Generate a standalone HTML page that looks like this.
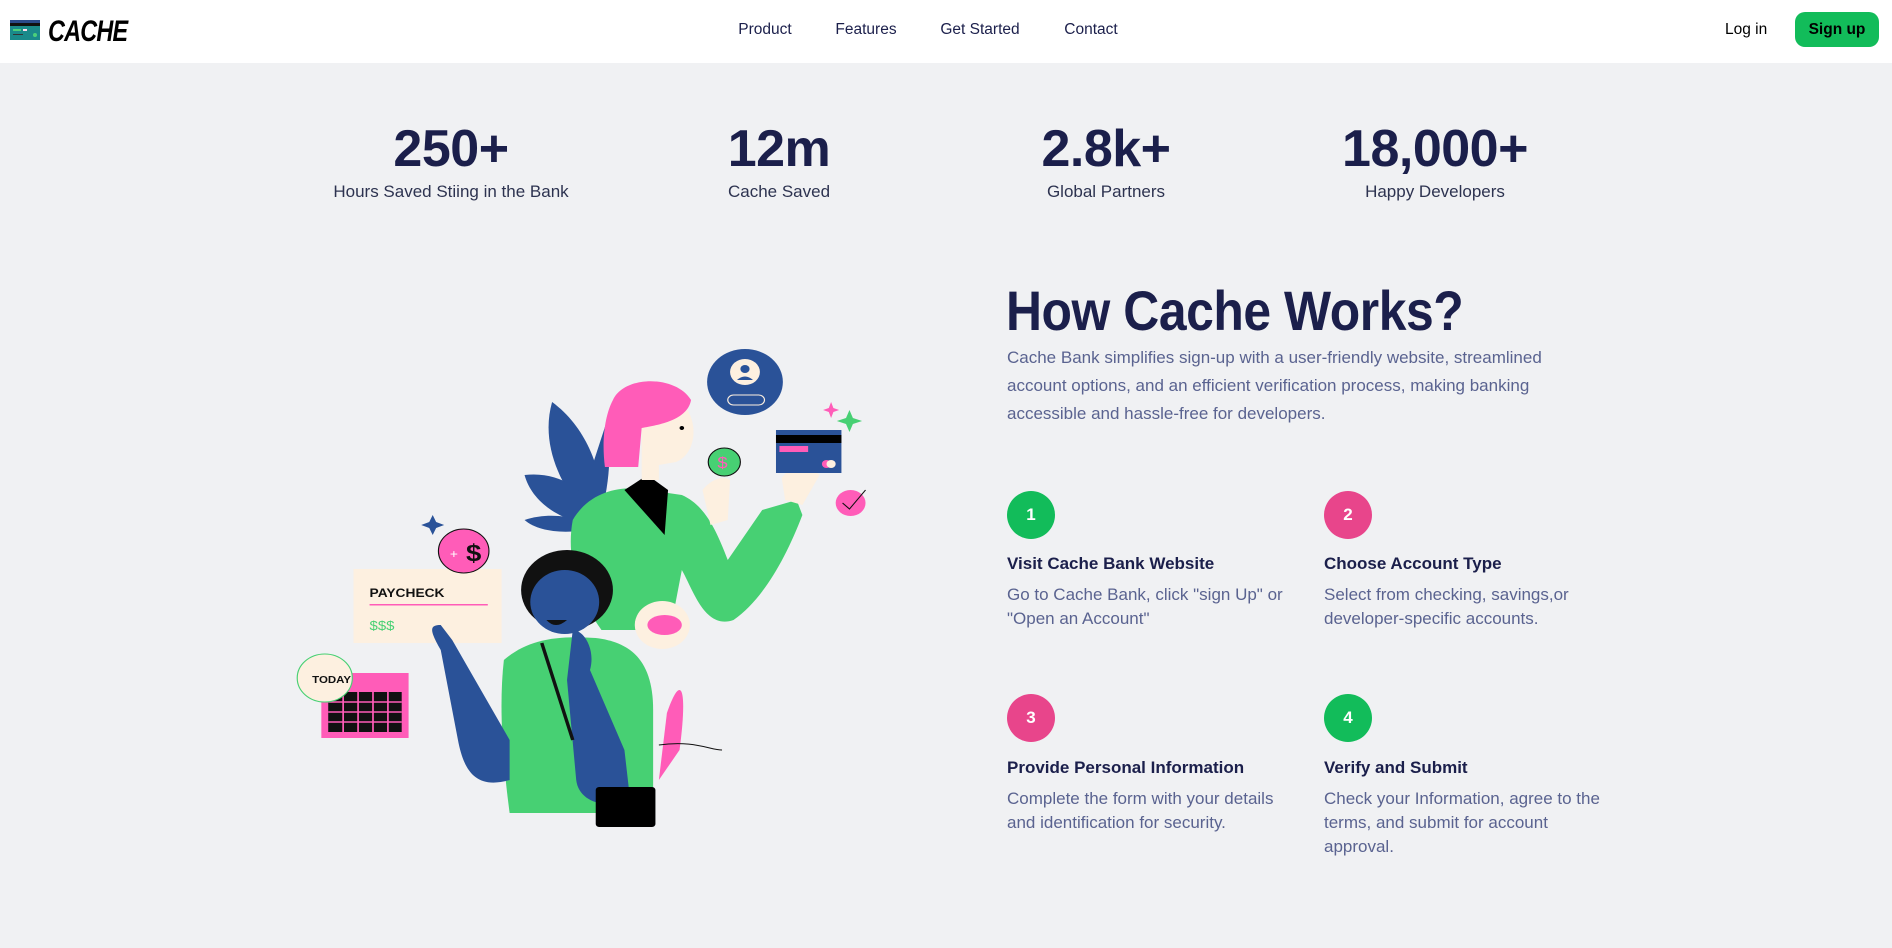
<!DOCTYPE html>
<html><head><meta charset="utf-8"><style>
*{margin:0;padding:0;box-sizing:border-box}
body{width:1892px;height:948px;background:#f0f1f3;font-family:"Liberation Sans",sans-serif;position:relative;overflow:hidden}
.hdr{position:absolute;left:0;top:0;width:1892px;height:63px;background:#fff}
.abs{position:absolute;white-space:nowrap}
.nav{top:21px;font-size:15.5px;color:#1b1f4b;transform:translateX(-50%)}
.num{top:119px;font-size:52px;font-weight:bold;color:#1b1f4b;transform:translateX(-50%);letter-spacing:-0.5px}
.lbl{top:182px;font-size:17px;color:#2d3350;transform:translateX(-50%)}
.circ{position:absolute;width:48px;height:48px;border-radius:50%;color:#fff;font-weight:bold;font-size:17px;text-align:center;line-height:48px}
.t{position:absolute;font-size:17px;font-weight:bold;color:#1b1f4b;white-space:nowrap}
.d{position:absolute;font-size:17px;color:#5a6390;line-height:24px}
.g{background:#12bc5a}.p{background:#e8458b}
</style></head><body>
<div class="hdr"></div>
<svg class="abs" style="left:10px;top:20px" width="30" height="20" viewBox="0 0 30 20"><rect width="30" height="20" fill="#1a8a8a"/><rect width="30" height="3" fill="#2a4a8a"/><rect y="3" width="30" height="3" fill="#111"/><rect x="3" y="9" width="8" height="2" fill="#4cd07a"/><rect x="13" y="9" width="4" height="2" fill="#fde"/><rect x="3" y="14" width="10" height="1" fill="#333"/><circle cx="25" cy="15" r="2" fill="#4cd07a"/></svg>
<div class="abs" style="left:48px;top:15px;font-size:30px;font-weight:bold;font-style:italic;letter-spacing:-1px;transform:scaleX(0.78);transform-origin:left;color:#000">CACHE</div>
<div class="abs nav" style="left:765px">Product</div>
<div class="abs nav" style="left:866px">Features</div>
<div class="abs nav" style="left:980px">Get Started</div>
<div class="abs nav" style="left:1091px">Contact</div>
<div class="abs" style="left:1725px;top:21px;font-size:15.5px;color:#000">Log in</div>
<div class="abs" style="left:1795px;top:12px;width:84px;height:35px;border-radius:10px;background:#12bc5a;color:#000;font-weight:bold;font-size:15.5px;text-align:center;line-height:35px">Sign up</div>

<div class="abs num" style="left:451px">250+</div><div class="abs lbl" style="left:451px">Hours Saved Stiing in the Bank</div>
<div class="abs num" style="left:779px">12m</div><div class="abs lbl" style="left:779px">Cache Saved</div>
<div class="abs num" style="left:1106px">2.8k+</div><div class="abs lbl" style="left:1106px">Global Partners</div>
<div class="abs num" style="left:1435px">18,000+</div><div class="abs lbl" style="left:1435px">Happy Developers</div>

<div class="abs" style="left:1006px;top:278px;font-size:56px;font-weight:bold;color:#1b1f4b;letter-spacing:-0.5px;transform:scaleX(0.89);transform-origin:left">How Cache Works?</div>
<div class="abs" style="left:1007px;top:344px;font-size:17px;color:#5a6390;line-height:28px;width:560px;white-space:normal">Cache Bank simplifies sign-up with a user-friendly website, streamlined account options, and an efficient verification process, making banking accessible and hassle-free for developers.</div>

<div class="circ g" style="left:1007px;top:491px">1</div>
<div class="t" style="left:1007px;top:554px">Visit Cache Bank Website</div>
<div class="d" style="left:1007px;top:583px">Go to Cache Bank, click "sign Up" or<br>"Open an Account"</div>
<div class="circ p" style="left:1324px;top:491px">2</div>
<div class="t" style="left:1324px;top:554px">Choose Account Type</div>
<div class="d" style="left:1324px;top:583px">Select from checking, savings,or<br>developer-specific accounts.</div>
<div class="circ p" style="left:1007px;top:694px">3</div>
<div class="t" style="left:1007px;top:758px">Provide Personal Information</div>
<div class="d" style="left:1007px;top:787px">Complete the form with your details<br>and identification for security.</div>
<div class="circ g" style="left:1324px;top:694px">4</div>
<div class="t" style="left:1324px;top:758px">Verify and Submit</div>
<div class="d" style="left:1324px;top:787px">Check your Information, agree to the<br>terms, and submit for account<br>approval.</div>

<svg class="abs" style="left:280px;top:330px" width="600" height="520" viewBox="0 0 522.6 520" preserveAspectRatio="none">
<path d="M237 72 C270 100 285 150 280 200 C250 170 225 120 237 72Z" fill="#2a5298"/>
<path d="M213 145 C250 140 275 170 280 195 C250 195 220 175 213 145Z" fill="#2a5298"/>
<path d="M213 190 C240 180 265 190 275 198 C250 205 225 202 213 190Z" fill="#2a5298"/>
<path d="M285 90 C290 130 285 170 275 200 L268 150Z" fill="#2a5298"/>
<path d="M255 190 C270 160 300 155 320 160 L350 165 C370 175 380 200 390 230 L420 180 L450 170 L455 185 C440 230 420 270 395 290 C370 300 360 260 350 240 L340 300 L280 300 C255 260 250 220 255 190Z" fill="#47d073"/>
<path d="M300 160 L320 145 L338 160 L335 205 Z" fill="#000"/>
<path d="M315 80 L355 80 C365 100 360 125 345 132 L330 135 L330 150 L315 150Z" fill="#fdf0e0"/>
<path d="M290 70 C300 45 345 45 358 70 C355 90 330 95 315 98 L312 137 L283 137 C280 110 283 85 290 70Z" fill="#ff5cb8"/>
<circle cx="350" cy="98" r="2" fill="#000"/>
<path d="M368 160 C375 150 385 145 392 150 L390 190 L375 195 Z" fill="#fdf0e0"/>
<path d="M437 148 L452 128 L470 145 L455 175 L440 170Z" fill="#fdf0e0"/>
<circle cx="387" cy="132" r="14" fill="#47d073" stroke="#111" stroke-width="1"/><text x="381" y="138" font-size="16" fill="#ff5cb8" font-family="Liberation Sans">$</text>
<circle cx="405" cy="52" r="33" fill="#2a5298"/><circle cx="405" cy="42" r="13" fill="#fdf0e0"/><circle cx="405" cy="39" r="4" fill="#2a5298"/><path d="M398 50 Q405 43 412 50Z" fill="#2a5298"/><rect x="390" y="65" width="32" height="10" rx="5" fill="none" stroke="#fdf0e0"/>
<rect x="432" y="100" width="57" height="43" fill="#2a5298"/><rect x="432" y="105" width="57" height="8" fill="#000"/><rect x="435" y="116" width="25" height="6" fill="#ff5cb8"/><circle cx="476" cy="134" r="4" fill="#ff5cb8"/><circle cx="480" cy="134" r="4" fill="#fdf0e0"/>
<circle cx="497" cy="173" r="13" fill="#ff5cb8"/><path d="M490 173 L496 179 L510 160" stroke="#111" fill="none"/>
<path d="M496 80 l3 8 l8 3 l-8 3 l-3 8 l-3 -8 l-8 -3 l8 -3z" fill="#47d073"/>
<path d="M480 72 l2 6 l5 2 l-5 2 l-2 6 l-2 -6 l-5 -2 l5 -2z" fill="#ff5cb8"/>
<circle cx="333" cy="295" r="24" fill="#fdf0e0"/><ellipse cx="335" cy="295" rx="15" ry="10" fill="#ff5cb8"/>
<rect x="64" y="239" width="129" height="74" fill="#fdf0e0"/>
<text x="78" y="267" font-size="12" font-weight="bold" font-family="Liberation Sans" fill="#111">PAYCHECK</text>
<rect x="78" y="274" width="103" height="1.5" fill="#ff5cb8"/>
<text x="78" y="300" font-size="13" fill="#47d073" font-family="Liberation Sans">$$$</text>
<circle cx="160" cy="221" r="22" fill="#ff5cb8" stroke="#111"/><text x="162" y="231" font-size="24" font-weight="bold" font-family="Liberation Sans" fill="#111">$</text><text x="148" y="228" font-size="12" fill="#fff" font-family="Liberation Sans">+</text>
<path d="M133 185 l3 7 l7 3 l-7 3 l-3 7 l-3 -7 l-7 -3 l7 -3z" fill="#2a5298"/>
<rect x="36" y="343" width="76" height="65" fill="#ff5cb8"/>
<rect x="42" y="362" width="64" height="40" fill="#111"/>
<g stroke="#ff5cb8" stroke-width="1.5"><line x1="42" y1="372" x2="106" y2="372"/><line x1="42" y1="382" x2="106" y2="382"/><line x1="42" y1="392" x2="106" y2="392"/><line x1="55" y1="362" x2="55" y2="402"/><line x1="68" y1="362" x2="68" y2="402"/><line x1="81" y1="362" x2="81" y2="402"/><line x1="94" y1="362" x2="94" y2="402"/></g>
<circle cx="39" cy="348" r="24" fill="#fdf0e0" stroke="#47d073"/><text x="28" y="353" font-size="10" font-weight="bold" font-family="Liberation Sans" fill="#111">TODAY</text>
<path d="M337 383 C350 340 355 360 348 420 L330 450Z" fill="#ff5cb8"/>
<path d="M195 330 C215 310 240 305 275 308 C305 312 325 330 325 380 L325 483 L200 483 C195 440 190 380 195 330Z" fill="#47d073"/>
<path d="M140 320 C130 300 130 295 140 295 L150 310 L165 340 L200 410 L200 450 C170 460 160 440 155 410Z" fill="#2a5298"/>
<path d="M255 300 C265 300 275 320 270 340 L300 420 L305 470 C280 480 260 470 258 450 L250 350 Z" fill="#2a5298"/>
<circle cx="250" cy="260" r="40" fill="#111"/>
<ellipse cx="248" cy="272" rx="30" ry="32" fill="#2a5298"/>
<path d="M232 290 Q240 300 250 290Z" fill="#111"/>
<path d="M228 313 L255 410" stroke="#111" stroke-width="3"/>
<rect x="275" y="457" width="52" height="40" rx="3" fill="#000"/>
<path d="M330 415 C360 410 375 420 385 420" stroke="#111" fill="none"/>
</svg>
</body></html>
